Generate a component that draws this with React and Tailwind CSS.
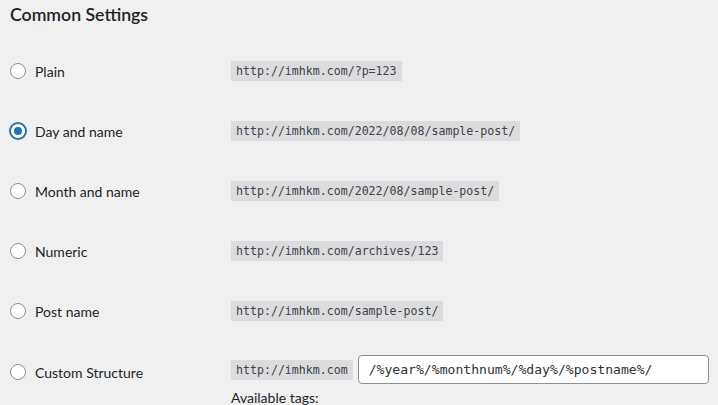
import React, { useState } from 'react';

const options = [
  { id: 'plain', label: 'Plain', url: 'http://imhkm.com/?p=123' },
  { id: 'day', label: 'Day and name', url: 'http://imhkm.com/2022/08/08/sample-post/' },
  { id: 'month', label: 'Month and name', url: 'http://imhkm.com/2022/08/sample-post/' },
  { id: 'numeric', label: 'Numeric', url: 'http://imhkm.com/archives/123' },
  { id: 'post', label: 'Post name', url: 'http://imhkm.com/sample-post/' },
];

const mono = { fontFamily: '"DejaVu Sans Mono", "Liberation Mono", monospace' };

const Radio = ({ checked }) => (
  <span
    className={`w-4 h-4 rounded-full border bg-white flex items-center justify-center shrink-0 ${
      checked ? 'border-[#2271b1] shadow-[0_0_0_1px_#2271b1]' : 'border-[#8c8f94]'
    }`}
  >
    {checked && <span className="w-2 h-2 rounded-full bg-[#2271b1]" />}
  </span>
);

const Code = ({ children }) => (
  <code className="bg-[#dcdcde] text-[#3c434a] text-[11.6px] leading-5 px-[5px] h-5 inline-block" style={mono}>
    {children}
  </code>
);

export default function App() {
  const [selected, setSelected] = useState('day');

  return (
    <div className="w-[718px] h-[405px] overflow-hidden bg-[#f0f0f1] text-[#1d2327]" style={{ fontFamily: 'Lato, "Liberation Sans", sans-serif' }}>
      <h2 className="text-[17.7px] font-semibold pl-[10px] pt-[3px] leading-6">Common Settings</h2>

      <div className="mt-[14px] flex flex-col">
        {options.map((o) => (
          <div key={o.id} className="flex items-center h-[60px] pl-[10px]">
            <label className="flex items-center gap-[9px] w-[221px] text-[14px] cursor-pointer" onClick={() => setSelected(o.id)}>
              <Radio checked={selected === o.id} />
              <span>{o.label}</span>
            </label>
            <Code>{o.url}</Code>
          </div>
        ))}

        <div className="flex items-start pl-[10px] pt-[14px]">
          <label className="flex items-center gap-[9px] w-[221px] h-[34px] text-[14px] cursor-pointer" onClick={() => setSelected('custom')}>
            <Radio checked={selected === 'custom'} />
            <span>Custom Structure</span>
          </label>
          <div className="flex flex-col">
            <div className="flex items-center gap-[5px]">
              <Code>http://imhkm.com</Code>
              <input
                defaultValue="/%year%/%monthnum%/%day%/%postname%/"
                className="w-[351px] h-[29px] bg-white border border-[#8c8f94] rounded px-[10px] text-[13.1px] text-[#2c3338] outline-none"
                style={mono}
              />
            </div>
            <p className="text-[14px] mt-[4px] leading-5">Available tags:</p>
          </div>
        </div>
      </div>
    </div>
  );
}
